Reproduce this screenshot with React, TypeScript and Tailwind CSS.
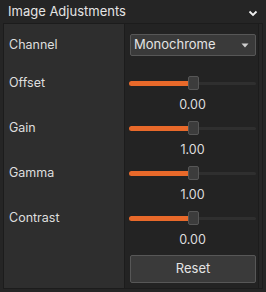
import React from 'react';

type SliderRow = {label: string; value: number; display: string};

const sliders: SliderRow[] = [
    {label: 'Offset', value: 0.5, display: '0.00'},
    {label: 'Gain', value: 0.5, display: '1.00'},
    {label: 'Gamma', value: 0.5, display: '1.00'},
    {label: 'Contrast', value: 0.5, display: '0.00'},
];

const Slider: React.FC<{value: number}> = ({value}) => {
    return (
        <div className="relative h-[14px] w-full flex items-center">
            <div className="absolute left-0 right-0 h-[3px] bg-[#2f2f2f] rounded-full"/>
            <div
                className="absolute left-0 h-[5px] bg-[#e8692a] rounded-l-full"
                style={{width: `calc(${value * 100}% - 5px)`}}
            />
            <div
                className="absolute top-0 h-[14px] w-[11px] rounded-[2px] bg-[#3c3c3c] border border-[#565656]"
                style={{left: `calc(${value * 100}% - 5px)`}}
            />
        </div>
    );
};

const App: React.FC = () => {
    return (
        <div
            className="w-[266px] h-[292px] bg-[#252525] text-[12.5px] text-[#dedede] flex flex-col"
            style={{fontFamily: 'Inter, "Noto Sans", sans-serif'}}
        >
            {/* Header */}
            <div className="h-[25px] flex items-center justify-between pl-[8px] pr-[8px]">
                <span className="text-[#e4e4e4] text-[13px] mt-[1px]">Image Adjustments</span>
                <svg width="10" height="8" viewBox="0 0 10 8" className="mt-[2px]">
                    <path d="M1.5 2.5 L5 6 L8.5 2.5" fill="none" stroke="#f0f0f0" strokeWidth="1.8"/>
                </svg>
            </div>

            {/* Panel */}
            <div className="mx-[3px] mb-[3px] flex-1 border border-[#1c1c1c] bg-[#262626] flex">
                <div className="flex-1 grid grid-cols-[120px_1fr] mr-[3px] border-r border-[#1c1c1c]">
                    {/* Channel */}
                    <div className="bg-[#2e2e2e] pt-[10px] pl-[5px]">
                        <div className="h-[22px] flex items-center">Channel</div>
                    </div>
                    <div className="bg-[#232323] border-l border-[#1c1c1c] pt-[10px] pl-[5px] pr-[2px]">
                        <div className="h-[22px] flex items-center justify-between rounded-[2px] bg-[#3a3a3a] border border-[#575757] pl-[3px] pr-[6px]">
                            <span className="text-[#e4e4e4] text-[13px]">Monochrome</span>
                            <svg width="8" height="5" viewBox="0 0 8 5">
                                <path d="M0.5 0.5 L7.5 0.5 L4 4.5 Z" fill="#cfcfcf"/>
                            </svg>
                        </div>
                    </div>

                    {sliders.map((s, i) => (
                        <React.Fragment key={s.label}>
                            <div className={`bg-[#2e2e2e] pl-[5px] ${i === 0 ? 'pt-[20px]' : 'pt-[8px]'}`}>
                                <div className="h-[14px] flex items-center">{s.label}</div>
                            </div>
                            <div className={`bg-[#232323] border-l border-[#1c1c1c] pl-[4px] pr-[2px] ${i === 0 ? 'pt-[20px]' : 'pt-[8px]'}`}>
                                <Slider value={s.value}/>
                                <div className="mt-[7px] h-[16px] leading-[16px] text-center">{s.display}</div>
                            </div>
                        </React.Fragment>
                    ))}

                    {/* Reset */}
                    <div className="bg-[#2e2e2e]"/>
                    <div className="bg-[#232323] border-l border-[#1c1c1c] pt-[7px] pl-[5px] pr-[2px] pb-[5px]">
                        <button className="w-full h-[28px] rounded-[2px] bg-[#3a3a3a] border border-[#575757] text-[#e4e4e4] text-[13px]">
                            Reset
                        </button>
                    </div>
                </div>
            </div>
        </div>
    );
};

export default App;
